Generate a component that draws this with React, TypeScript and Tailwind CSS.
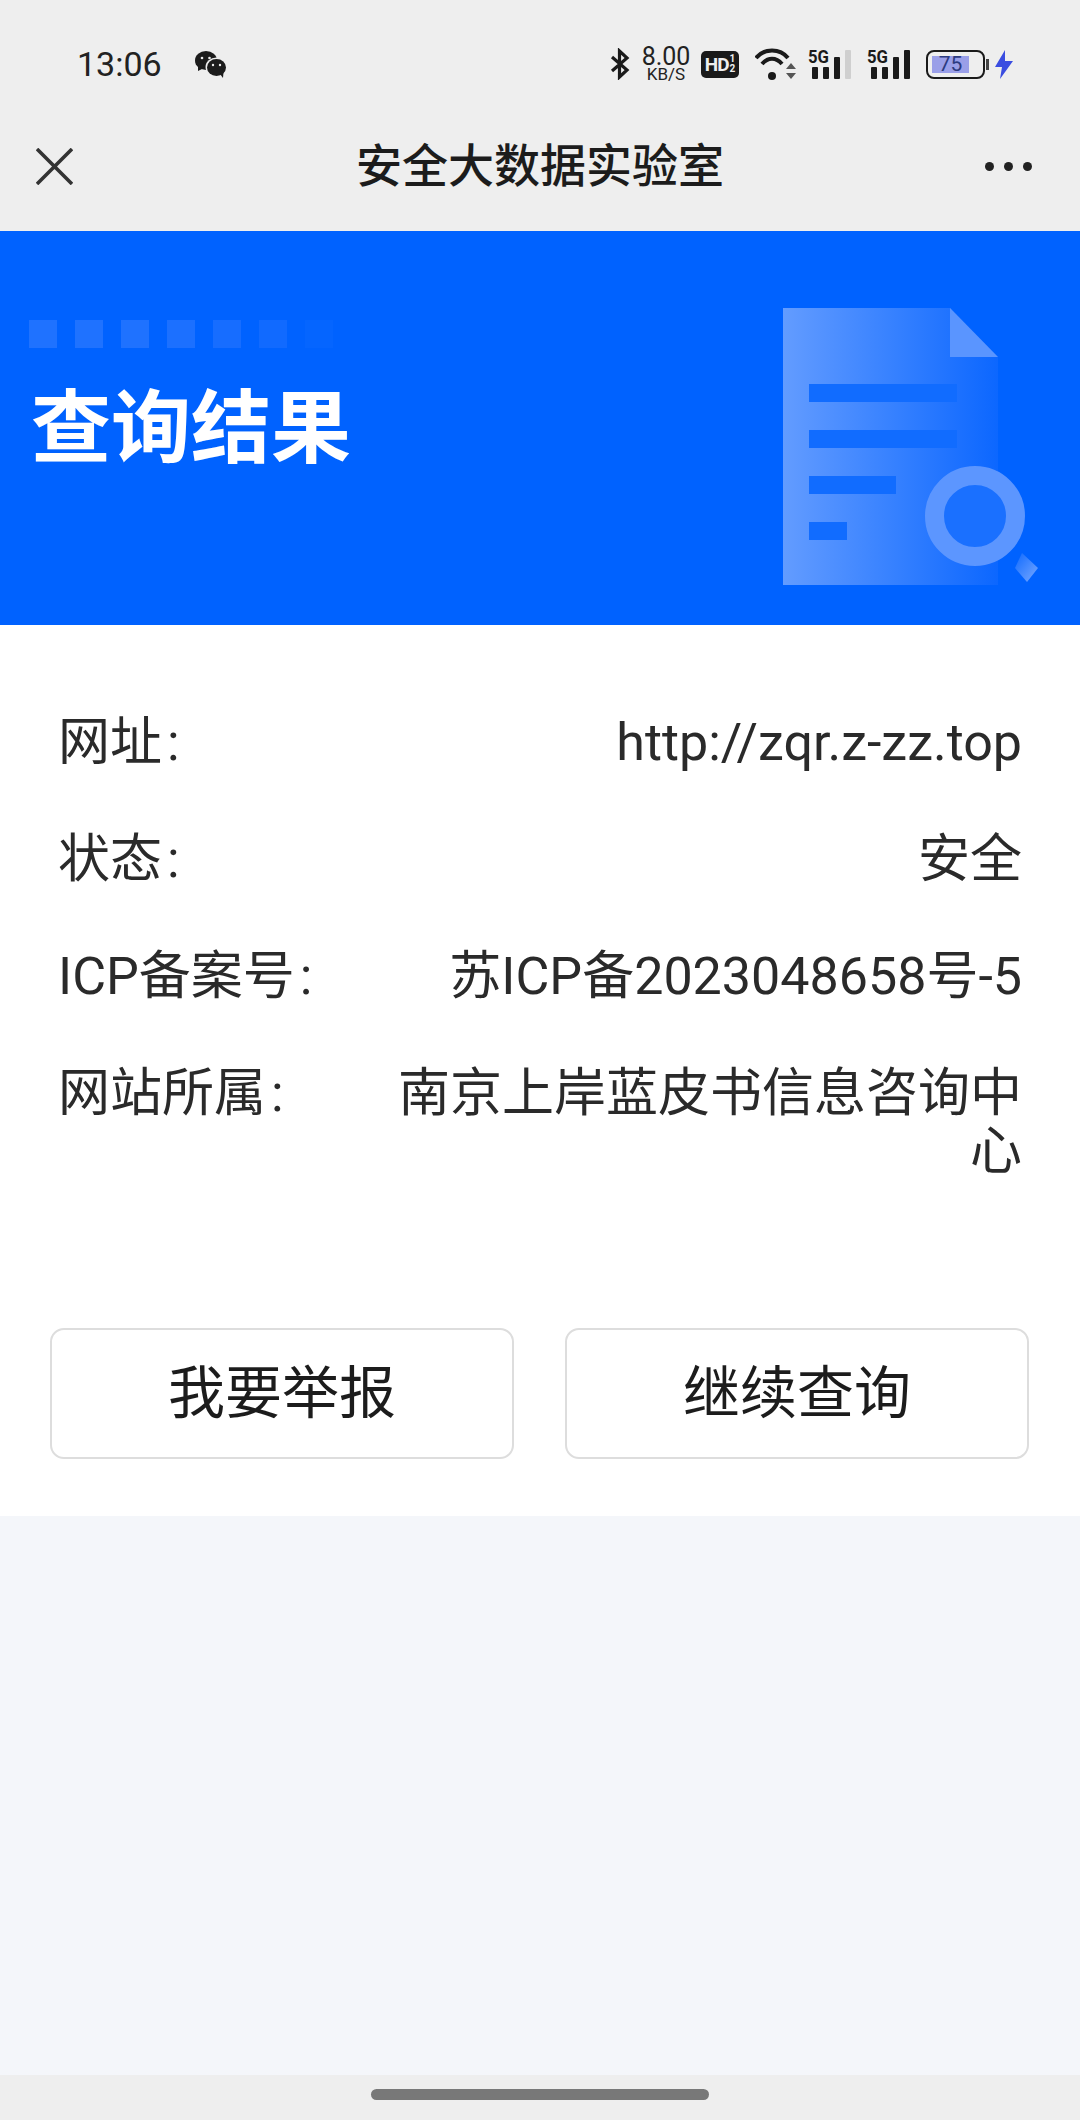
const CJK = { fontFamily: '"Roboto", "Noto Sans CJK SC", sans-serif' };

const rows = [
  { label: '网址', value: 'http://zqr.z-zz.top' },
  { label: '状态', value: '安全' },
  { label: 'ICP备案号', value: '苏ICP备2023048658号-5' },
  { label: '网站所属', value: '南京上岸蓝皮书信息咨询中心' },
];

function WeChatIcon() {
  return (
    <svg width="33" height="28" viewBox="0 0 33 28">
      <ellipse cx="12" cy="10.5" rx="11" ry="9.5" fill="#1c1c1c" />
      <path d="M4 16 L4 21 L10 18 Z" fill="#1c1c1c" />
      <circle cx="8" cy="8" r="1.3" fill="#eee" />
      <circle cx="15.5" cy="8" r="1.3" fill="#eee" />
      <ellipse cx="22.5" cy="17" rx="11" ry="9.5" fill="#eee" />
      <ellipse cx="22.5" cy="17.5" rx="9.5" ry="8.5" fill="#1c1c1c" />
      <path d="M26 24 L29 28 L29.5 22 Z" fill="#1c1c1c" />
      <circle cx="19" cy="15" r="1.2" fill="#eee" />
      <circle cx="26" cy="15" r="1.2" fill="#eee" />
    </svg>
  );
}

function Signal({ last }: { last: string }) {
  return (
    <svg width="44" height="38" viewBox="0 -4 44 38">
      <text x="0" y="14" fontSize="18" fontWeight="700" fontFamily="Roboto, sans-serif" fill="#1a1a1a" textLength="21" lengthAdjust="spacingAndGlyphs">5G</text>
      <rect x="4" y="18" width="6" height="12" rx="1" fill="#1a1a1a" />
      <rect x="15" y="18" width="6" height="12" rx="1" fill="#1a1a1a" />
      <rect x="26" y="8" width="6" height="22" rx="1" fill="#1a1a1a" />
      <rect x="37" y="1" width="6" height="29" rx="1" fill={last} />
    </svg>
  );
}

function DocArt() {
  return (
    <svg width="258" height="290" viewBox="0 0 258 290" className="shrink-0">
      <defs>
        <linearGradient id="doc" x1="0" x2="1" y1="0" y2="0">
          <stop offset="0" stopColor="#639cff" />
          <stop offset="1" stopColor="#0c67ff" />
        </linearGradient>
        <linearGradient id="handle" x1="0" x2="1" y1="0" y2="1">
          <stop offset="0" stopColor="#0f6aff" />
          <stop offset="1" stopColor="#78a8ff" />
        </linearGradient>
      </defs>
      <path d="M0 0 H167 L215 49 V277 H0 Z" fill="url(#doc)" />
      <path d="M167 0 L215 49 H167 Z" fill="#5a95ff" />
      <rect x="26" y="76" width="148" height="18" fill="#116cff" />
      <rect x="26" y="122" width="148" height="18" fill="#116cff" />
      <rect x="26" y="168" width="87" height="18" fill="#116cff" />
      <rect x="26" y="214" width="38" height="18" fill="#116cff" />
      <circle cx="192" cy="208" r="40.5" fill="#1a70ff" stroke="#5c96ff" strokeWidth="19" />
      <path d="M239 245 L255 260 L244 274 L232 260 Z" fill="url(#handle)" />
    </svg>
  );
}

export default function App() {
  return (
    <div className="flex flex-col w-[1080px] h-[2120px] overflow-hidden bg-[#f4f6fa] text-[#262626]" style={CJK}>
      {/* Status bar */}
      <div className="flex items-center justify-between h-[90px] pt-[38px] pl-[77px] pr-[67px] bg-[#eeeeee]">
        <div className="flex items-center gap-[32px]">
          <span className="text-[34px] leading-[40px] text-[#222]">13:06</span>
          <WeChatIcon />
        </div>
        <div className="flex items-center">
          <svg width="20" height="32" viewBox="0 0 20 32" fill="none" stroke="#1a1a1a" strokeWidth="3.2">
            <path d="M2 9 L17 22 L9.5 29 V3 L17 10 L2 23" />
          </svg>
          <div className="flex flex-col items-center w-[50px] ml-[11px] text-[#222]">
            <span className="text-[25px] leading-[20px]">8.00</span>
            <span className="text-[17px] leading-[15px]">KB/S</span>
          </div>
          <div className="flex items-center justify-center gap-[1px] w-[38px] h-[27px] ml-[10px] rounded-[5px] bg-[#1a1a1a] text-[#eee] font-bold">
            <span className="text-[19px] leading-none tracking-[-1px]">HD</span>
            <span className="flex flex-col text-[10px] leading-[10px]">
              <span>1</span>
              <span>2</span>
            </span>
          </div>
          <svg width="42" height="34" viewBox="0 0 42 34" className="ml-[16px]">
            <path d="M1 11 C9 1 25 1 33 11 M7 17 C13 10 21 10 27 17" fill="none" stroke="#1a1a1a" strokeWidth="4" />
            <circle cx="17" cy="29" r="4" fill="#1a1a1a" />
            <path d="M36 16 L41 22 H31 Z M31 26 H41 L36 32 Z" fill="#555" />
          </svg>
          <div className="ml-[11px]"><Signal last="#cfcfcf" /></div>
          <div className="ml-[15px]"><Signal last="#1a1a1a" /></div>
          <div className="relative flex items-center w-[59px] h-[29px] ml-[15px] p-[4px] rounded-[8px] border-[2px] border-[#1a1a1a]">
            <div className="flex items-center justify-center w-[37px] h-full bg-[#9a9fe8] text-[#2c3a80] text-[21px] leading-none">75</div>
            <div className="absolute -right-[6px] top-[7px] w-[3px] h-[11px] bg-[#444]" />
          </div>
          <svg width="18" height="29" viewBox="0 0 18 29" className="ml-[10px]">
            <path d="M10 0 L0 17 H7 L5 29 L18 11 H10 Z" fill="#3a4de0" />
          </svg>
        </div>
      </div>

      {/* Nav bar */}
      <div className="grid grid-cols-[1fr_auto_1fr] items-center h-[141px] pt-[11px] px-[36px] bg-[#eeeeee]">
        <svg width="37" height="37" viewBox="0 0 37 37" fill="none" stroke="#333" strokeWidth="3.6">
          <path d="M1 1 L36 36 M36 1 L1 36" />
        </svg>
        <span className="text-[46px] leading-[58px] font-medium text-[#1c1c1c]">安全大数据实验室</span>
        <div className="flex items-center justify-end gap-[10px] pr-[12px]">
          <div className="w-[9px] h-[9px] rounded-full bg-[#222]" />
          <div className="w-[9px] h-[9px] rounded-full bg-[#222]" />
          <div className="w-[9px] h-[9px] rounded-full bg-[#222]" />
        </div>
      </div>

      {/* Banner */}
      <div className="flex justify-between h-[394px] pt-[89px] pl-[29px] pr-[39px] bg-[#0062ff]">
        <div className="flex flex-col">
          <div className="flex gap-[18px]">
            <div className="w-[28px] h-[28px] bg-[#1f72ff]" />
            <div className="w-[28px] h-[28px] bg-[#1f72ff]" />
            <div className="w-[28px] h-[28px] bg-[#1f72ff]" />
            <div className="w-[28px] h-[28px] bg-[#1c70ff]" />
            <div className="w-[28px] h-[28px] bg-[#176dff]" />
            <div className="w-[28px] h-[28px] bg-[#116aff]" />
            <div className="w-[28px] h-[28px] bg-[#0565ff]" />
          </div>
          <h1 className="mt-[31px] ml-[2px] text-[80px] leading-[100px] font-bold text-white">查询结果</h1>
        </div>
        <div className="-mt-[12px]"><DocArt /></div>
      </div>

      {/* Result */}
      <div className="flex flex-col h-[891px] pt-[89px] bg-white">
        <div className="flex flex-col gap-[59px] px-[58px]">
          {rows.map((r) => (
            <div key={r.label} className="flex justify-between text-[52px] leading-[58px] text-[#2a2a2a]">
              <span className="shrink-0">{r.label}<span className="ml-[5px]">:</span></span>
              <span className="w-[630px] text-right break-all">{r.value}</span>
            </div>
          ))}
        </div>
        <div className="grid grid-cols-2 gap-[51px] mt-[147px] pl-[50px] pr-[51px]">
          <button className="h-[131px] rounded-[14px] border-[2px] border-[#dddddd] bg-white text-[57px] text-[#1c1c1c]">我要举报</button>
          <button className="h-[131px] rounded-[14px] border-[2px] border-[#dddddd] bg-white text-[57px] text-[#1c1c1c]">继续查询</button>
        </div>
      </div>

      <div className="flex-1" />

      {/* Home indicator */}
      <div className="flex justify-center h-[45px] pt-[14px] bg-[#eeeeee]">
        <div className="w-[338px] h-[11px] rounded-full bg-[#787878]" />
      </div>
    </div>
  );
}
